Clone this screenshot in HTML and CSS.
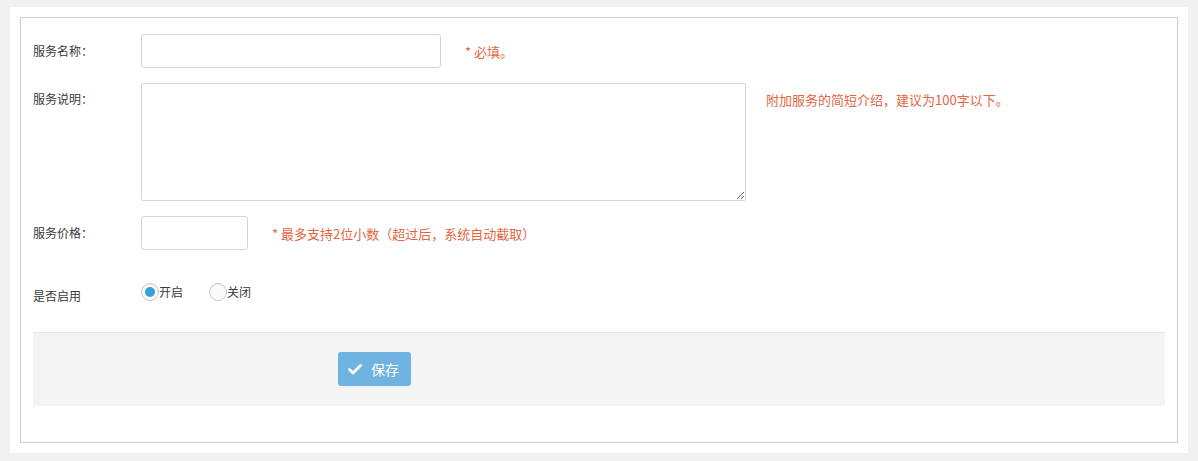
FILE: index.html
```html
<!DOCTYPE html>
<html lang="zh-CN">
<head>
<meta charset="utf-8">
<title>服务</title>
<link rel="stylesheet" href="styles.css">
</head>
<body>
<div class="page">
  <div class="box">
    <form class="form">
      <div class="row">
        <label class="label">服务名称：</label>
        <input class="input input-name" type="text">
        <span class="hint hint-star">* 必填。</span>
      </div>
      <div class="row row-top">
        <label class="label">服务说明：</label>
        <textarea class="textarea"></textarea>
        <span class="hint hint-desc">附加服务的简短介绍，建议为100字以下。</span>
      </div>
      <div class="row">
        <label class="label">服务价格：</label>
        <input class="input input-price" type="text">
        <span class="hint hint-star">* 最多支持2位小数（超过后，系统自动截取）</span>
      </div>
      <div class="row row-radio">
        <label class="label label-radio">是否启用</label>
        <div class="radios">
          <span class="radio"><span class="dot checked"></span><span class="rtext">开启</span></span>
          <span class="radio"><span class="dot"></span><span class="rtext">关闭</span></span>
        </div>
      </div>
      <div class="actions">
        <button type="button" class="btn">
          <svg class="check" width="14" height="11" viewBox="0 0 14 11"><path d="M1.5 5.6 L5 9 L12.5 1.6" fill="none" stroke="#fff" stroke-width="2.8" stroke-linecap="round" stroke-linejoin="round"/></svg>
          <span>保存</span>
        </button>
      </div>
    </form>
  </div>
</div>
</body>
</html>
```
FILE: styles.css
```css
html, body {
  margin: 0;
  padding: 0;
  background: #f1f1f1;
}
body {
  padding: 7px 10px 8px;
  font-family: "Noto Sans CJK SC", "Noto Sans", sans-serif;
  color: #333;
}
.page {
  background: #fff;
  padding: 10px 10px 10px;
  height: 426px;
  box-sizing: content-box;
}
.box {
  border: 1px solid #c5d0dc;
  height: 424px;
  padding: 0 12px;
}
.form {
  padding-top: 16px;
}
.row {
  display: flex;
  align-items: center;
  margin-bottom: 15px;
}
.row-top {
  align-items: flex-start;
}
.label {
  width: 108px;
  flex: none;
  font-size: 12px;
  line-height: 34px;
  color: #393939;
  white-space: nowrap;
}
.row-top .label {
  line-height: 16px;
  padding-top: 8px;
}
.input, .textarea {
  box-sizing: border-box;
  border: 1px solid #d5d5d5;
  border-radius: 3px;
  background: #fff;
  margin: 0;
  font-family: inherit;
  font-size: 12px;
}
.input {
  height: 34px;
}
.input-name {
  width: 300px;
}
.input-price {
  width: 107px;
}
.textarea {
  width: 605px;
  height: 118px;
  resize: both;
  border-radius: 2px;
  display: block;
}
.hint {
  font-size: 13px;
  color: #e4653f;
  white-space: nowrap;
}
.hint-star {
  margin-left: 24px;
}
.hint-desc {
  margin-left: 20px;
  line-height: 16px;
  padding-top: 9px;
}
.row-radio {
  margin-top: 33px;
  margin-bottom: 0;
  height: 49px;
  align-items: flex-start;
}
.label-radio {
  line-height: 16px;
  padding-top: 5px;
}
.radios {
  display: flex;
  align-items: center;
}
.radio {
  display: flex;
  align-items: center;
  margin-right: 26px;
  font-size: 12px;
  color: #393939;
}
.dot {
  width: 16px;
  height: 16px;
  border: 1px solid #c8c8c8;
  border-radius: 50%;
  background: #fafafa;
  position: relative;
  flex: none;
  box-shadow: inset 0 1px 1px rgba(0,0,0,0.05);
}
.dot.checked::after {
  content: "";
  position: absolute;
  left: 3px;
  top: 3px;
  width: 10px;
  height: 10px;
  border-radius: 50%;
  background: #32a3d4;
}
.rtext {
  line-height: 16px;
}
.actions {
  background: #f4f4f4;
  border-top: 1px solid #e5e5e5;
  height: 73px;
  padding-left: 305px;
  display: flex;
  align-items: center;
}
.btn {
  background: #6fb3e0;
  border: 0;
  border-radius: 3px;
  height: 34px;
  width: 73px;
  padding: 0 0 0 10px;
  display: flex;
  align-items: center;
  color: #fff;
  font-family: inherit;
  font-size: 14px;
  gap: 9px;
  margin-top: -1px;
}
.check {
  display: block;
}
```
